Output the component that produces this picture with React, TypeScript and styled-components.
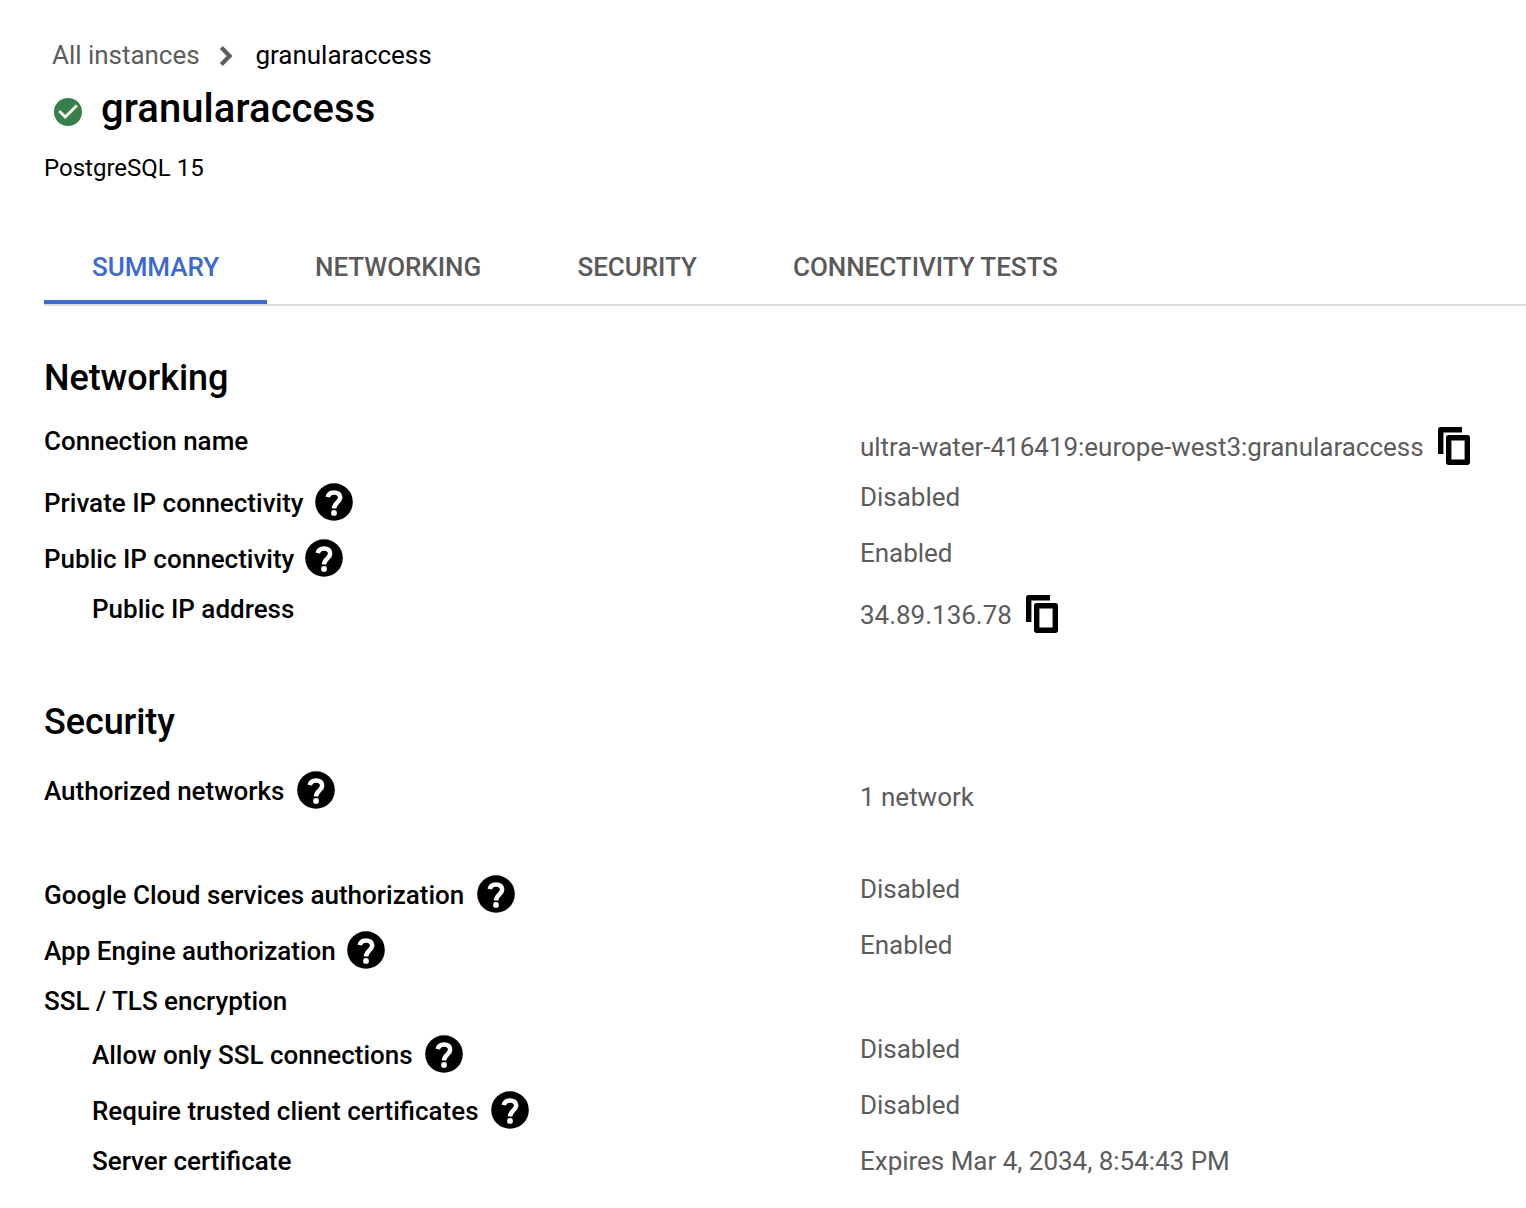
import React from "react";
import styled, { createGlobalStyle } from "styled-components";

const Global = createGlobalStyle`
  *{box-sizing:border-box}
  body{margin:0;background:#fff;color:#000;font-family:Roboto,"Liberation Sans",sans-serif}
`;
const Page = styled.main`
  height: 1208px;
  padding-left: 44px;
  overflow: hidden;
`;
const Crumbs = styled.nav`
  display: flex;
  align-items: center;
  height: 32px;
  margin-top: 39px;
  padding-left: 8px;
  font-size: 26px;
  letter-spacing: -0.03px;
  white-space: nowrap;
`;
const Parent = styled.span`
  color: #5c5c5c;
  width: 167px;
`;
const Chevron = styled.svg`
  width: 14px;
  height: 22px;
  margin: 2px 22.5px 0 0;
`;
const TitleRow = styled.header`
  display: flex;
  align-items: center;
  height: 48px;
  margin-top: 14px;
  padding-left: 10px;
`;
const Status = styled.svg`
  width: 28px;
  height: 28px;
  margin: 5px 19px 0 0;
`;
const Title = styled.h1`
  margin: 0;
  font-size: 40px;
  line-height: 48px;
  font-weight: 500;
  letter-spacing: 0.08px;
`;
const Version = styled.div`
  margin-top: 19px;
  height: 32px;
  line-height: 32px;
  font-size: 24px;
`;
const Tabs = styled.div`
  display: flex;
  height: 78px;
  margin-top: 44px;
  border-bottom: 2px solid #dedede;
`;
const Tab = styled.div<{ $active?: boolean; $w: number }>`
  width: ${(p) => p.$w}px;
  height: 76px;
  padding: 23px 0 0 48px;
  font-size: 26px;
  line-height: 32px;
  font-weight: 500;
  letter-spacing: -0.04px;
  white-space: nowrap;
  color: ${(p) => (p.$active ? "#3c68d2" : "#5a5a5a")};
  border-bottom: ${(p) => (p.$active ? "4px solid #3c68d2" : "0")};
`;
const Section = styled.section<{ $top: number }>`
  padding-top: ${(p) => p.$top}px;
`;
const Heading = styled.h2<{ $gap: number }>`
  margin: 0 0 ${(p) => p.$gap}px;
  font-size: 36px;
  line-height: 44px;
  font-weight: 500;
  letter-spacing: -0.08px;
`;
const Row = styled.div<{ $h: number }>`
  display: grid;
  grid-template-columns: 816px 1fr;
  align-items: start;
  height: ${(p) => p.$h}px;
  font-size: 26px;
  line-height: 32px;
  white-space: nowrap;
`;
const Label = styled.div<{ $indent?: boolean; $top: number }>`
  display: flex;
  padding: ${(p) => p.$top}px 0 0 ${(p) => (p.$indent ? 48 : 0)}px;
  font-weight: 500;
`;
const Value = styled.div<{ $top: number }>`
  display: flex;
  padding-top: ${(p) => p.$top}px;
  color: #5c5c5c;
  letter-spacing: -0.02px;
`;
const HelpIcon = styled.svg<{ $gap: number }>`
  width: 38px;
  height: 38px;
  margin: -4px 0 -4px ${(p) => p.$gap}px;
`;
const CopyIcon = styled.svg`
  width: 32px;
  height: 38px;
  margin: -4px 0 -4px 14.4px;
`;

const Help = ({ gap }: { gap: number }) => (
  <HelpIcon $gap={gap} viewBox="0 0 38 38" fill="none">
    <circle cx="19" cy="19" r="18.8" fill="#000" />
    <path
      d="M12.8 14.2C13.3 11 15.7 9.4 19 9.4C22.8 9.4 25.2 11.4 25.2 14.6C25.2 19.2 19 19.6 19 25.6"
      stroke="#fff"
      strokeWidth="4.5"
    />
    <circle cx="19" cy="29.9" r="2.9" fill="#fff" />
  </HelpIcon>
);
const Copy = () => (
  <CopyIcon viewBox="0 0 32 38" fill="none" stroke="#000" strokeWidth="5.4" strokeLinejoin="round">
    <path d="M2.7 27V2.7H24" />
    <rect x="10.7" y="10.7" width="18.6" height="24.6" />
  </CopyIcon>
);

type Item = {
  label: string;
  value?: string;
  h: number;
  lt?: number;
  vt?: number;
  help?: number;
  copy?: boolean;
  indent?: boolean;
};

const networking: Item[] = [
  { label: "Connection name", value: "ultra-water-416419:europe-west3:granularaccess", h: 56, vt: 6, copy: true },
  { label: "Private IP connectivity", value: "Disabled", h: 56, lt: 6, help: 11.5 },
  { label: "Public IP connectivity", value: "Enabled", h: 56, lt: 6, help: 11 },
  { label: "Public IP address", value: "34.89.136.78", h: 56, vt: 6, copy: true, indent: true },
];
const security: Item[] = [
  { label: "Authorized networks", value: "1 network", h: 98, vt: 6, help: 13 },
  { label: "Google Cloud services authorization", value: "Disabled", h: 56, lt: 6, help: 13 },
  { label: "App Engine authorization", value: "Enabled", h: 56, lt: 6, help: 11.5 },
  { label: "SSL / TLS encryption", h: 48 },
  { label: "Allow only SSL connections", value: "Disabled", h: 56, lt: 6, help: 12, indent: true },
  { label: "Require trusted client certificates", value: "Disabled", h: 56, lt: 6, help: 12, indent: true },
  { label: "Server certificate", value: "Expires Mar 4, 2034, 8:54:43 PM", h: 46, indent: true },
];

const Rows = ({ items }: { items: Item[] }) => (
  <>
    {items.map((i) => (
      <Row key={i.label} $h={i.h}>
        <Label $top={i.lt ?? 0} $indent={i.indent}>
          <span>{i.label}</span>
          {i.help && <Help gap={i.help} />}
        </Label>
        {i.value && (
          <Value $top={i.vt ?? 0}>
            <span>{i.value}</span>
            {i.copy && <Copy />}
          </Value>
        )}
      </Row>
    ))}
  </>
);

export default function App() {
  return (
    <Page>
      <Global />
      <Crumbs>
        <Parent>All instances</Parent>
        <Chevron viewBox="0 0 14 22" fill="none" stroke="#5c5c5c" strokeWidth="4.2">
          <path d="M2.3 2.5L10.6 11L2.3 19.5" />
        </Chevron>
        <span>granularaccess</span>
      </Crumbs>
      <TitleRow>
        <Status viewBox="2 2 20 20">
          <circle cx="12" cy="12" r="10" fill="#38804a" />
          <path d="M10 17l-5-5 1.41-1.41L10 14.17l7.59-7.59L19 8l-9 9z" fill="#fff" />
        </Status>
        <Title>granularaccess</Title>
      </TitleRow>
      <Version>PostgreSQL 15</Version>
      <Tabs>
        <Tab $active $w={223}>SUMMARY</Tab>
        <Tab $w={262.5}>NETWORKING</Tab>
        <Tab $w={215.5}>SECURITY</Tab>
        <Tab $w={362}>CONNECTIVITY TESTS</Tab>
      </Tabs>
      <Section $top={50}>
        <Heading $gap={25}>Networking</Heading>
        <Rows items={networking} />
      </Section>
      <Section $top={51}>
        <Heading $gap={31}>Security</Heading>
        <Rows items={security} />
      </Section>
    </Page>
  );
}
